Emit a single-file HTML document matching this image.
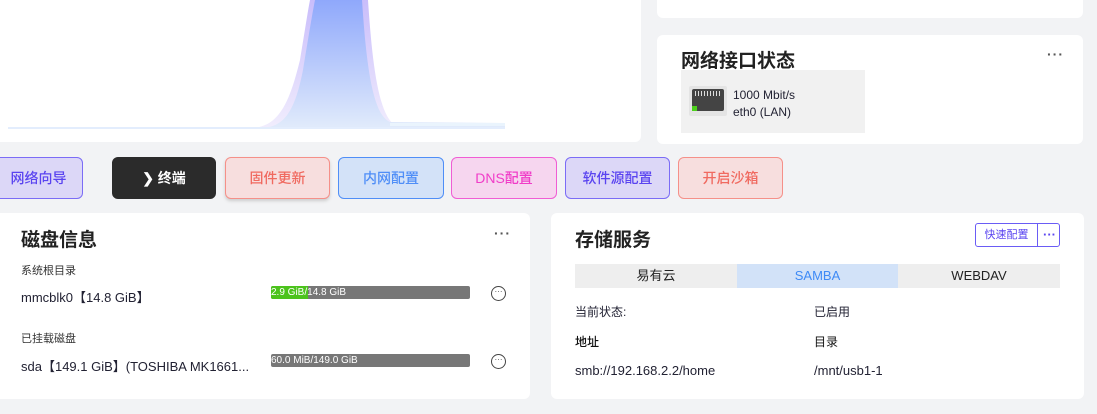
<!DOCTYPE html>
<html><head><meta charset="utf-8"><style>
*{box-sizing:border-box;margin:0;padding:0}
body{width:1097px;height:414px;background:#f2f3f5;position:relative;overflow:hidden;font-family:"Liberation Sans","Noto Sans CJK SC",sans-serif;color:#222}
.card{position:absolute;background:#fff;border-radius:6px}
.btn{position:absolute;top:157px;height:42px;border-radius:6px;border:1px solid;font-size:14px;display:flex;align-items:center;justify-content:center;font-weight:500}
.t{position:absolute;white-space:nowrap}
.dots{position:absolute;font-size:14px;color:#555;letter-spacing:1px;font-weight:bold;line-height:10px}
.bar{position:absolute;width:199px;height:13px;background:#777;border-radius:2px;overflow:hidden}
.bar span{position:absolute;left:0;top:0;font-size:10px;color:#fff;line-height:13px;white-space:nowrap}
.circ{position:absolute;width:15px;height:15px;border:1px solid #444;border-radius:50%;font-size:8px;line-height:9px;text-align:center;color:#444}
</style></head><body>
<div class="card" style="left:-6px;top:-10px;width:647px;height:152px"></div>
<svg width="641" height="142" style="position:absolute;left:0;top:0">
<defs><linearGradient id="g1" x1="0" y1="0" x2="0" y2="1"><stop offset="0" stop-color="#c9bdfb"/><stop offset="1" stop-color="#f1edfd"/></linearGradient>
<linearGradient id="g2" x1="0" y1="0" x2="0" y2="1"><stop offset="0" stop-color="#8fa8fb"/><stop offset="1" stop-color="#e1ebfb"/></linearGradient></defs>
<path d="M8 128 L250 128 C280 128 290 100 300 60 C305 30 308 10 310 0 L368 0 C372 60 378 115 395 125 L505 126 L505 128 Z" fill="url(#g1)"/>
<path d="M8 128 L260 128 C285 128 295 110 303 70 C308 40 312 15 315 0 L362 0 C366 60 372 115 390 122 L505 123 L505 128 Z" fill="url(#g2)"/>
<path d="M390 123 L505 123 L505 126 L390 126 Z" fill="#eaf4fd"/>
<path d="M8 128 L505 128" stroke="#e3edfd" stroke-width="2"/>
</svg>
<div class="card" style="left:657px;top:-10px;width:426px;height:28px"></div>
<div class="card" style="left:657px;top:35px;width:426px;height:109px">
<div class="t" style="left:24px;top:11px;font-size:19px;font-weight:bold;color:#222">网络接口状态</div>
<div class="dots" style="left:390px;top:14px">···</div>
<div style="position:absolute;left:24px;top:35px;width:184px;height:63px;background:#f1f1f1">
<div style="position:absolute;left:8px;top:16px;width:38px;height:30px;background:#e4e4e4;border-radius:2px">
<div style="position:absolute;left:3px;top:3px;width:32px;height:22px;background:#444;border-radius:2px"></div>
<div style="position:absolute;left:6px;top:5px;width:26px;height:5px;background:repeating-linear-gradient(90deg,#ddd 0 1px,#444 1px 3px)"></div>
<div style="position:absolute;left:3px;top:20px;width:5px;height:5px;background:#4cd01c"></div></div>
<div class="t" style="left:52px;top:17px;font-size:12px;color:#223;line-height:17px">1000 Mbit/s<br>eth0 (LAN)</div></div>
</div>
<div class="btn" style="left:-6px;width:89px;background:#dcd7f7;border-color:#7b6cf6;color:#5a44f0">网络向导</div>
<div class="btn" style="left:112px;width:104px;background:#2b2b2b;border-color:#2b2b2b;color:#fff;font-weight:bold">❯ 终端</div>
<div class="btn" style="left:225px;width:105px;background:#f7dede;border-color:#f59089;color:#f06a60;box-shadow:0 2px 3px #ccc">固件更新</div>
<div class="btn" style="left:338px;width:106px;background:#d3e2f8;border-color:#4f8ef7;color:#4f8ef7">内网配置</div>
<div class="btn" style="left:451px;width:106px;background:#f6d6ef;border-color:#f05dd4;color:#f03dc8">DNS配置</div>
<div class="btn" style="left:565px;width:105px;background:#dcd7f7;border-color:#7b6cf6;color:#5a44f0">软件源配置</div>
<div class="btn" style="left:678px;width:105px;background:#f7dede;border-color:#f59089;color:#f06a60">开启沙箱</div>
<div class="card" style="left:-6px;top:213px;width:536px;height:186px">
<div class="t" style="left:27px;top:12px;font-size:19px;font-weight:bold">磁盘信息</div>
<div class="dots" style="left:500px;top:15px">···</div>
<div class="t" style="left:27px;top:49px;font-size:11px;color:#333">系统根目录</div>
<div class="t" style="left:27px;top:74px;font-size:13px;color:#223">mmcblk0【14.8 GiB】</div>
<div class="bar" style="left:277px;top:73px"><div style="position:absolute;left:0;top:0;width:37px;height:13px;background:#4cc31c"></div><span>2.9 GiB/14.8 GiB</span></div>
<div class="circ" style="left:497px;top:73px">···</div>
<div class="t" style="left:27px;top:117px;font-size:11px;color:#333">已挂载磁盘</div>
<div class="t" style="left:27px;top:143px;font-size:13px;color:#223">sda【149.1 GiB】(TOSHIBA MK1661...</div>
<div class="bar" style="left:277px;top:141px"><span>60.0 MiB/149.0 GiB</span></div>
<div class="circ" style="left:497px;top:141px">···</div>
</div>
<div class="card" style="left:551px;top:213px;width:533px;height:186px">
<div class="t" style="left:24px;top:12px;font-size:19px;font-weight:bold">存储服务</div>
<div style="position:absolute;left:424px;top:10px;width:85px;height:24px;border:1px solid #6a5cf5;border-radius:3px;font-size:11px;color:#5a44f0">
<div style="position:absolute;left:0;top:0;width:62px;height:22px;line-height:22px;text-align:center;border-right:1px solid #6a5cf5">快速配置</div>
<div style="position:absolute;left:63px;top:7px;width:21px;line-height:8px;text-align:center;font-weight:bold;font-size:13px">···</div></div>
<div style="position:absolute;left:24px;top:51px;width:485px;height:24px;background:#eee;font-size:13px;line-height:24px;text-align:center">
<div style="position:absolute;left:0;width:162px">易有云</div>
<div style="position:absolute;left:162px;width:161px;background:#d2e2f8;color:#3e8af6">SAMBA</div>
<div style="position:absolute;left:323px;width:162px">WEBDAV</div></div>
<div class="t" style="left:24px;top:90px;font-size:12px;color:#223">当前状态:</div>
<div class="t" style="left:263px;top:90px;font-size:12px;color:#223">已启用</div>
<div class="t" style="left:24px;top:120px;font-size:12px;color:#111;font-weight:500">地址</div>
<div class="t" style="left:263px;top:120px;font-size:12px;color:#111">目录</div>
<div class="t" style="left:24px;top:150px;font-size:13px;color:#223">smb://192.168.2.2/home</div>
<div class="t" style="left:263px;top:150px;font-size:13px;color:#223">/mnt/usb1-1</div>
</div>
</body></html>
